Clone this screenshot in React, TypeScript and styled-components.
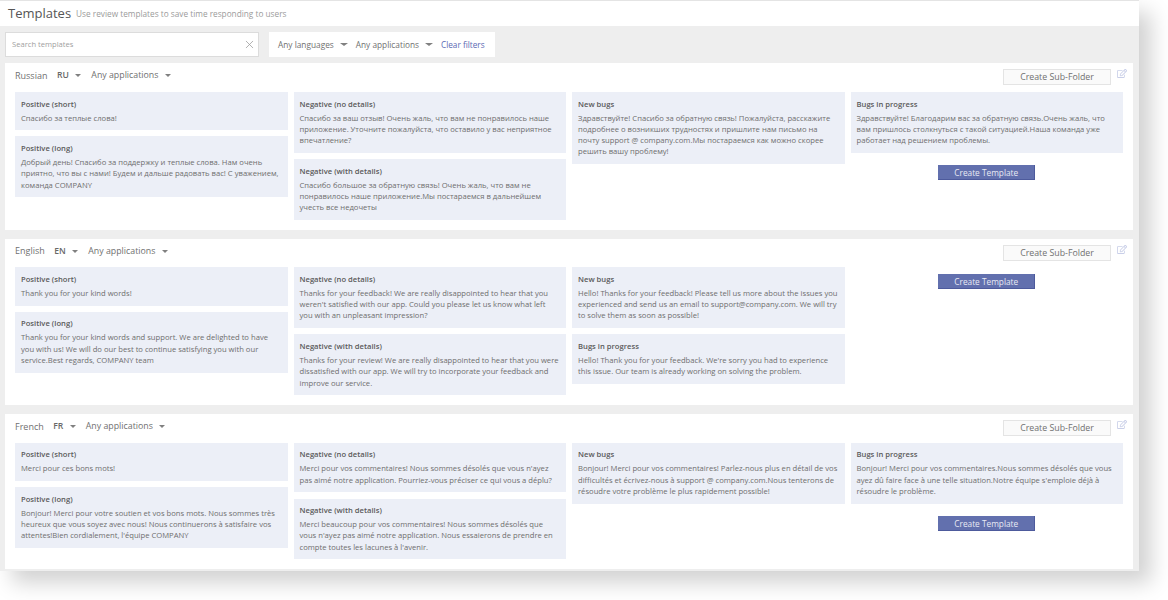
import { ReactElement } from 'react';
import styled, { createGlobalStyle } from 'styled-components';
import { FaRegEdit } from 'react-icons/fa';
import { X } from 'lucide-react';

const GlobalStyle = createGlobalStyle`
  html, body {
    margin: 0;
    padding: 0;
    background: #fff;
    font-family: 'Open Sans', 'Liberation Sans', sans-serif;
  }
  * {
    box-sizing: border-box;
  }
`;

type Card = { title: string; text: string };

type FolderData = {
  name: string;
  code: string;
  headHeight: number;
  buttonTop: number;
  columns: Card[][];
};

const FOLDERS: FolderData[] = [
  {
    name: 'Russian',
    code: 'RU',
    headHeight: 29,
    buttonTop: 6,
    columns: [
      [
        { title: 'Positive (short)', text: 'Спасибо за теплые слова!' },
        {
          title: 'Positive (long)',
          text: 'Добрый день! Спасибо за поддержку и теплые слова. Нам очень приятно, что вы с нами! Будем и дальше радовать вас! С уважением, команда COMPANY',
        },
      ],
      [
        {
          title: 'Negative (no details)',
          text: 'Спасибо за ваш отзыв! Очень жаль, что вам не понравилось наше приложение. Уточните пожалуйста, что оставило у вас неприятное впечатление?',
        },
        {
          title: 'Negative (with details)',
          text: 'Спасибо большое за обратную связь! Очень жаль, что вам не понравилось наше приложение.Мы постараемся в дальнейшем учесть все недочеты',
        },
      ],
      [
        {
          title: 'New bugs',
          text: 'Здравствуйте! Спасибо за обратную связь! Пожалуйста, расскажите подробнее о возникших трудностях и пришлите нам письмо на почту support @ company.com.Мы постараемся как можно скорее решить вашу проблему!',
        },
      ],
      [
        {
          title: 'Bugs in progress',
          text: 'Здравствуйте! Благодарим вас за обратную связь.Очень жаль, что вам пришлось столкнуться с такой ситуацией.Наша команда уже работает над решением проблемы.',
        },
      ],
    ],
  },
  {
    name: 'English',
    code: 'EN',
    headHeight: 28.5,
    buttonTop: 7,
    columns: [
      [
        { title: 'Positive (short)', text: 'Thank you for your kind words!' },
        {
          title: 'Positive (long)',
          text: 'Thank you for your kind words and support. We are delighted to have you with us! We will do our best to continue satisfying you with our service.Best regards, COMPANY team',
        },
      ],
      [
        {
          title: 'Negative (no details)',
          text: "Thanks for your feedback! We are really disappointed to hear that you weren't satisfied with our app. Could you please let us know what left you with an unpleasant impression?",
        },
        {
          title: 'Negative (with details)',
          text: 'Thanks for your review! We are really disappointed to hear that you were dissatisfied with our app. We will try to incorporate your feedback and improve our service.',
        },
      ],
      [
        {
          title: 'New bugs',
          text: 'Hello! Thanks for your feedback! Please tell us more about the issues you experienced and send us an email to support@company.com. We will try to solve them as soon as possible!',
        },
        {
          title: 'Bugs in progress',
          text: "Hello! Thank you for your feedback. We're sorry you had to experience this issue. Our team is already working on solving the problem.",
        },
      ],
      [],
    ],
  },
  {
    name: 'French',
    code: 'FR',
    headHeight: 28.5,
    buttonTop: 6.5,
    columns: [
      [
        { title: 'Positive (short)', text: 'Merci pour ces bons mots!' },
        {
          title: 'Positive (long)',
          text: "Bonjour! Merci pour votre soutien et vos bons mots. Nous sommes très heureux que vous soyez avec nous! Nous continuerons à satisfaire vos attentes!Bien cordialement, l'équipe COMPANY",
        },
      ],
      [
        {
          title: 'Negative (no details)',
          text: "Merci pour vos commentaires! Nous sommes désolés que vous n'ayez pas aimé notre application. Pourriez-vous préciser ce qui vous a déplu?",
        },
        {
          title: 'Negative (with details)',
          text: "Merci beaucoup pour vos commentaires! Nous sommes désolés que vous n'ayez pas aimé notre application. Nous essaierons de prendre en compte toutes les lacunes à l'avenir.",
        },
      ],
      [
        {
          title: 'New bugs',
          text: 'Bonjour! Merci pour vos commentaires! Parlez-nous plus en détail de vos difficultés et écrivez-nous à support @ company.com.Nous tenterons de résoudre votre problème le plus rapidement possible!',
        },
      ],
      [
        {
          title: 'Bugs in progress',
          text: "Bonjour! Merci pour vos commentaires.Nous sommes désolés que vous ayez dû faire face à une telle situation.Notre équipe s'emploie déjà à résoudre le problème.",
        },
      ],
    ],
  },
];

function Folder({ folder }: { folder: FolderData }): ReactElement {
  return (
    <Section>
      <SectionHead $height={folder.headHeight}>
        <FolderLabel>
          <FolderName>{folder.name}</FolderName>
          <FolderCode>{folder.code}</FolderCode>
          <SmallArrow />
          <FolderSelect>Any applications</FolderSelect>
          <SmallArrow />
        </FolderLabel>
        <SubFolderButton type="button">Create Sub-Folder</SubFolderButton>
        <EditIcon />
      </SectionHead>
      <Columns>
        {folder.columns.map((cards, index) => (
          <Column key={index}>
            {cards.map(card => (
              <TemplateCard key={card.title}>
                <CardTitle>{card.title}</CardTitle>
                <CardText>{card.text}</CardText>
              </TemplateCard>
            ))}
            {index === 3 && (
              <CreateButton type="button" $top={folder.buttonTop}>
                Create Template
              </CreateButton>
            )}
          </Column>
        ))}
      </Columns>
    </Section>
  );
}

function App(): ReactElement {
  return (
    <Page>
      <GlobalStyle />
      <Window>
        <TopBar>
          <Title>Templates</Title>
          <Subtitle>Use review templates to save time responding to users</Subtitle>
        </TopBar>
        <Content>
          <FilterRow>
            <SearchBox>
              <SearchInput placeholder="Search templates" />
              <X size={13} color="#9a9a9a" strokeWidth={1.4} />
            </SearchBox>
            <Filters>
              <FilterSelect>Any languages</FilterSelect>
              <Arrow />
              <FilterSelect>Any applications</FilterSelect>
              <Arrow />
              <ClearLink>Clear filters</ClearLink>
            </Filters>
          </FilterRow>
          {FOLDERS.map(folder => (
            <Folder key={folder.code} folder={folder} />
          ))}
        </Content>
      </Window>
    </Page>
  );
}

export default App;

const Page = styled.div`
  width: 1168px;
  height: 600px;
  overflow: hidden;
`;

const Window = styled.div`
  width: 1139px;
  height: 571px;
  background: #eeeeee;
  border-top: 1px solid #e4e4e4;
  box-shadow: 12px 12px 20px rgba(0, 0, 0, 0.18);
  overflow: hidden;
`;

const TopBar = styled.div`
  height: 25px;
  background: #fff;
  display: flex;
  align-items: center;
  padding: 0 0 1px 8px;
`;

const Title = styled.h1`
  margin: 0;
  font-size: 13px;
  font-weight: 400;
  color: #555;
`;

const Subtitle = styled.span`
  margin: 1px 0 0 5px;
  font-size: 8.25px;
  color: #9b9b9b;
`;

const Content = styled.div`
  padding: 6px 6px 0 5px;
`;

const FilterRow = styled.div`
  display: flex;
  gap: 10px;
  height: 24.5px;
  margin-bottom: 6.5px;
`;

const SearchBox = styled.div`
  width: 254px;
  background: #fff;
  border: 1px solid #dcdcdc;
  display: flex;
  align-items: center;
  padding: 0 2px 0 6px;
`;

const SearchInput = styled.input`
  flex: 1;
  min-width: 0;
  border: 0;
  outline: 0;
  padding: 0;
  font-family: inherit;
  font-size: 7.6px;
  &::placeholder {
    color: #a0a0a0;
    opacity: 1;
  }
`;

const Filters = styled.div`
  background: #fff;
  display: flex;
  align-items: center;
  padding: 0 10px 0 9px;
`;

const FilterSelect = styled.span`
  font-size: 8.3px;
  color: #707070;
  white-space: nowrap;
`;

const Arrow = styled.i`
  width: 0;
  height: 0;
  margin: 1px 8px 0 6px;
  border-left: 4px solid transparent;
  border-right: 4px solid transparent;
  border-top: 3.5px solid #808080;
`;

const ClearLink = styled.a`
  font-size: 8.2px;
  color: #5a69b3;
`;

const Section = styled.section`
  background: #fff;
  padding: 0 9px 10px 10px;
  margin-bottom: 9px;
`;

const SectionHead = styled.div<{ $height: number }>`
  position: relative;
  height: ${props => props.$height}px;
  display: flex;
  justify-content: space-between;
  align-items: flex-start;
  padding-top: 6px;
`;

const FolderLabel = styled.div`
  display: flex;
  align-items: center;
  height: 12px;
`;

const FolderName = styled.span`
  font-size: 9px;
  color: #707070;
  margin-right: 9.5px;
`;

const FolderCode = styled.span`
  font-size: 8.6px;
  font-weight: 600;
  color: #686868;
`;

const FolderSelect = styled.span`
  font-size: 8.8px;
  color: #707070;
  white-space: nowrap;
`;

const SmallArrow = styled.i`
  width: 0;
  height: 0;
  margin: 1px 10px 0 6.5px;
  border-left: 3.5px solid transparent;
  border-right: 3.5px solid transparent;
  border-top: 3.5px solid #808080;
`;

const SubFolderButton = styled.button`
  margin-right: 13px;
  width: 108px;
  height: 16px;
  padding: 0;
  background: #fafafa;
  border: 1px solid #e4e4e4;
  font-family: inherit;
  font-size: 8.8px;
  color: #707070;
`;

const EditIcon = styled(FaRegEdit)`
  position: absolute;
  top: 6px;
  right: -3px;
  width: 10px;
  height: 9px;
  color: #c9cfe8;
`;

const Columns = styled.div`
  display: grid;
  grid-template-columns: repeat(4, 272.5px);
  column-gap: 6px;
  align-items: start;
`;

const Column = styled.div`
  display: flex;
  flex-direction: column;
  gap: 6.3px;
`;

const TemplateCard = styled.article`
  background: #eceff7;
  padding: 5.5px 6px 6.4px;
`;

const CardTitle = styled.h3`
  margin: 0 0 2px;
  font-size: 7.65px;
  line-height: 13px;
  font-weight: 600;
  color: #5a5a5a;
`;

const CardText = styled.p`
  margin: 0;
  font-size: 7.65px;
  line-height: 11.3px;
  color: #6e6e6e;
`;

const CreateButton = styled.button<{ $top: number }>`
  align-self: center;
  width: 97px;
  height: 15px;
  margin-top: ${props => props.$top}px;
  padding: 0;
  background: #6270ae;
  border: 0;
  border-right: 1px solid #4d5a9c;
  border-bottom: 1px solid #4d5a9c;
  font-family: inherit;
  font-size: 8.3px;
  color: #e8eaf4;
`;
